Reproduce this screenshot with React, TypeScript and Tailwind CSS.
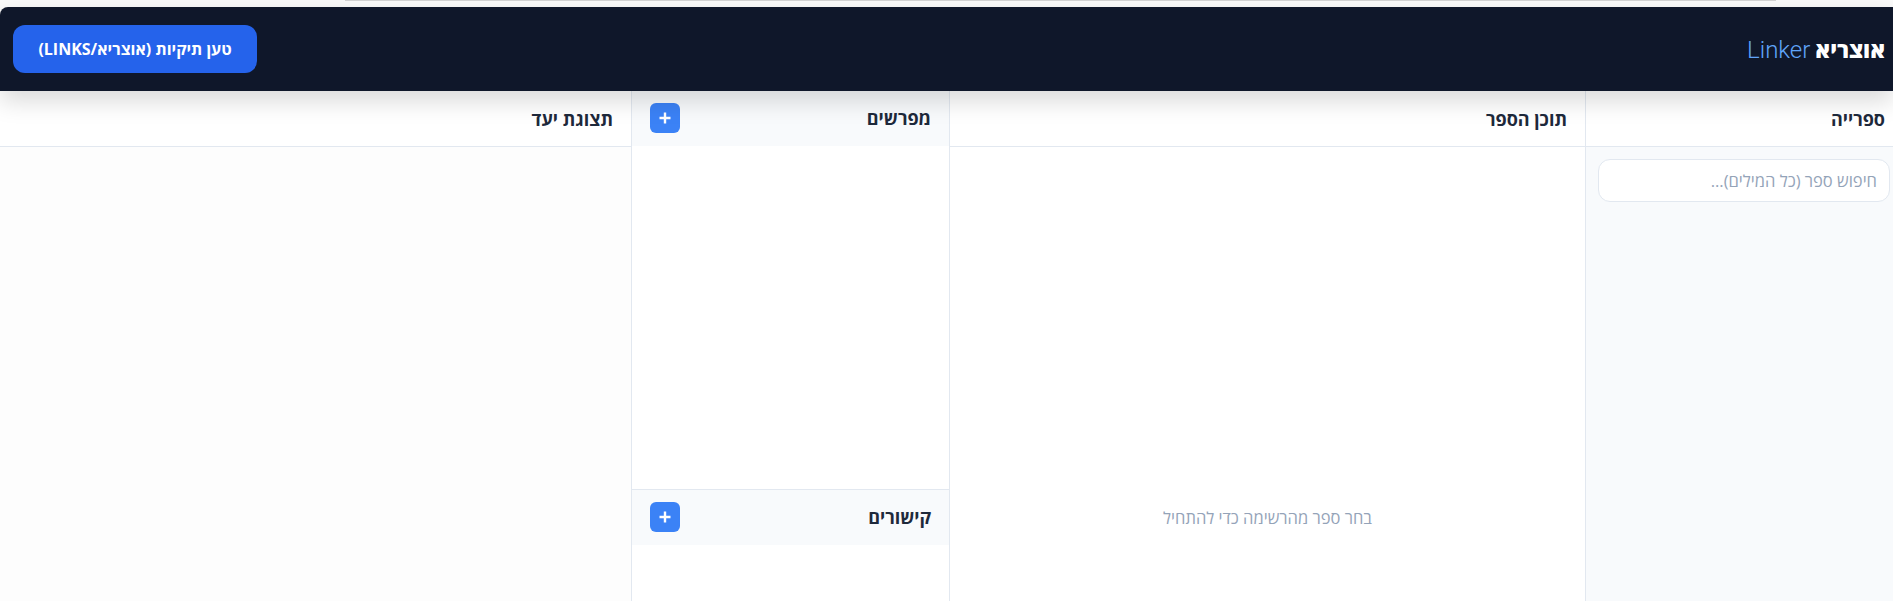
const font = { fontFamily: '"Open Sans", "Noto Sans", sans-serif' };

const PanelHeader = ({ title, narrow }: { title: string; narrow?: boolean }) => (
  <div className={`h-[56px] shrink-0 flex items-center border-b border-[#e2e8f0] bg-white ${narrow ? 'pr-2 pl-[18px]' : 'px-[18px]'}`}>
    <h2 className="text-lg font-bold text-[#1e293b]">{title}</h2>
  </div>
);

const SubHeader = ({ title }: { title: string }) => (
  <div className="h-[55px] shrink-0 flex items-center justify-between pr-[18px] pl-[18px] pb-px bg-[#f8fafc]">
    <h2 className="text-lg font-bold text-[#1e293b]">{title}</h2>
    <button className="w-[30px] h-[30px] rounded-md bg-[#3b82f6] text-white flex items-center justify-center">
      <svg width="14" height="14" viewBox="0 0 14 14" fill="none" stroke="currentColor" strokeWidth="2.4">
        <path d="M7 1.5v11M1.5 7h11" />
      </svg>
    </button>
  </div>
);

export default function App() {
  return (
    <div dir="rtl" style={font} className="h-[601px] overflow-hidden bg-[#fafafa] flex flex-col">
      <div className="h-[7px] shrink-0">
        <div className="h-px mr-[117px] ml-[345px] bg-[#d4d4d4]" />
      </div>
      <header className="relative z-10 h-[84px] shrink-0 bg-[#0f172a] rounded-tl-lg flex items-center justify-between pr-2 pl-[13px] shadow-[0_10px_25px_rgba(0,0,0,0.15)]">
        <div dir="ltr" className="flex items-baseline gap-[5px] text-white">
          <span className="text-2xl font-light font-['Roboto'] text-[#60a5fa]">Linker</span>
          <span className="text-[22px] font-extrabold">אוצריא</span>
        </div>
        <button className="w-[244px] h-[48px] rounded-xl bg-[#2563eb] text-white text-base font-bold">
          טען תיקיות (אוצריא/LINKS)
        </button>
      </header>
      <main className="flex-1 flex min-h-0">
        <section className="w-[308px] shrink-0 border-l border-[#e2e8f0] flex flex-col bg-[#f8fafc]">
          <PanelHeader title="ספרייה" narrow />
          <div className="pt-3 pl-3 pr-[3px]">
            <input
              placeholder="חיפוש ספר (כל המילים)..."
              className="w-full h-[43px] rounded-xl border border-[#e2e8f0] bg-white px-3 text-[16.5px] placeholder:text-[#94a3b8]"
            />
          </div>
        </section>
        <section className="w-[636px] shrink-0 border-l border-[#e2e8f0] flex flex-col bg-white">
          <PanelHeader title="תוכן הספר" />
          <div className="h-[742px] shrink-0 flex items-center justify-center text-[16.5px] text-[#94a3b8]">
            בחר ספר מהרשימה כדי להתחיל
          </div>
        </section>
        <section className="w-[318px] shrink-0 border-l border-[#e2e8f0] flex flex-col bg-white">
          <SubHeader title="מפרשים" />
          <div className="h-[344px] shrink-0 border-b border-[#e2e8f0]" />
          <SubHeader title="קישורים" />
        </section>
        <section className="flex-1 flex flex-col bg-[#fdfdfd]">
          <PanelHeader title="תצוגת יעד" />
        </section>
      </main>
    </div>
  );
}
